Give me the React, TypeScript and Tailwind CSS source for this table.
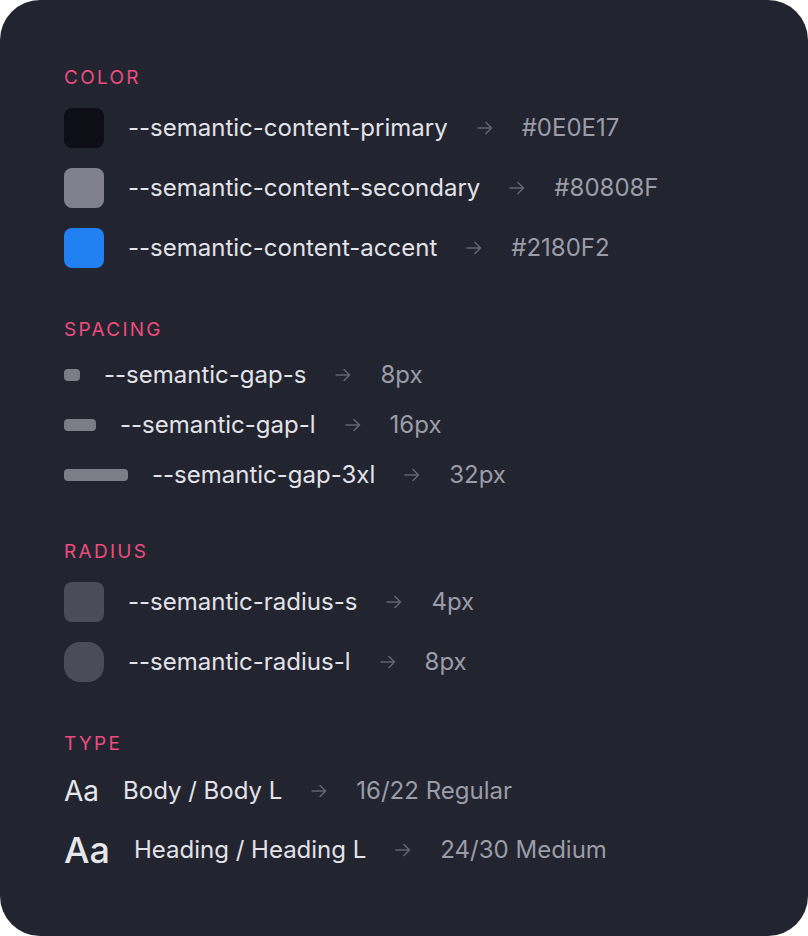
import React from 'react';

const Arrow = () => (
  <svg width="18" height="18" viewBox="0 0 18 18" fill="none" className="shrink-0 text-[#62646e]">
    <path d="M2 9 H15.5 M10 3.5 L15.5 9 L10 14.5" stroke="currentColor" strokeWidth="1.6" strokeLinecap="round" strokeLinejoin="round" />
  </svg>
);

const colors = [
  { name: '--semantic-content-primary', value: '#0E0E17', swatch: 'bg-[#0e0e17]' },
  { name: '--semantic-content-secondary', value: '#80808F', swatch: 'bg-[#80808f]' },
  { name: '--semantic-content-accent', value: '#2180F2', swatch: 'bg-[#2180f2]' },
];

const spacing = [
  { name: '--semantic-gap-s', value: '8px', bar: 'w-4' },
  { name: '--semantic-gap-l', value: '16px', bar: 'w-8' },
  { name: '--semantic-gap-3xl', value: '32px', bar: 'w-16' },
];

const radius = [
  { name: '--semantic-radius-s', value: '4px', box: 'rounded-lg' },
  { name: '--semantic-radius-l', value: '8px', box: 'rounded-2xl' },
];

const Heading = ({ children }: { children: React.ReactNode }) => (
  <h2 className="pt-[2px] -mb-[2px] text-[19px] leading-6 tracking-[0.12em] text-[#ec4c7e]">{children}</h2>
);

const Row = ({ lead, name, value }: { lead: React.ReactNode; name: string; value: string }) => (
  <div className="flex items-center">
    {lead}
    <span className="ml-6 text-[#e2e2e8]">{name}</span>
    <span className="mx-7"><Arrow /></span>
    <span className="text-[#9b9ca6]">{value}</span>
  </div>
);

export default function App() {
  return (
    <div className="min-h-screen bg-white">
      <div className="w-[808px] h-[936px] rounded-[40px] bg-[#222430] p-16 font-['Inter',sans-serif] text-[24px] leading-[30px]">
        <section>
          <Heading>COLOR</Heading>
          <div className="mt-5 flex flex-col gap-5">
            {colors.map((c) => (
              <Row
                key={c.name}
                lead={<div className={`w-10 h-10 rounded-lg ${c.swatch}`} />}
                name={c.name}
                value={c.value}
              />
            ))}
          </div>
        </section>

        <section className="mt-12">
          <Heading>SPACING</Heading>
          <div className="mt-5 flex flex-col gap-5">
            {spacing.map((s) => (
              <Row
                key={s.name}
                lead={<div className={`h-3 rounded-sm bg-[#7c7d87] ${s.bar}`} />}
                name={s.name}
                value={s.value}
              />
            ))}
          </div>
        </section>

        <section className="mt-12">
          <Heading>RADIUS</Heading>
          <div className="mt-5 flex flex-col gap-5">
            {radius.map((r) => (
              <Row
                key={r.name}
                lead={<div className={`w-10 h-10 bg-[#4a4d57] ${r.box}`} />}
                name={r.name}
                value={r.value}
              />
            ))}
          </div>
        </section>

        <section className="mt-12">
          <Heading>TYPE</Heading>
          <div className="mt-5 flex flex-col gap-5">
            <div className="flex items-center h-[34px]">
              <span className="text-[28px] leading-[34px] text-[#e6e6eb]">Aa</span>
              <span className="ml-6 text-[#e2e2e8]">Body / Body L</span>
              <span className="mx-7"><Arrow /></span>
              <span className="text-[#9b9ca6]">16/22 Regular</span>
            </div>
            <div className="flex items-center h-[44px]">
              <span className="text-[36px] leading-[44px] font-medium text-[#e6e6eb]">Aa</span>
              <span className="ml-6 text-[#e2e2e8]">Heading / Heading L</span>
              <span className="mx-7"><Arrow /></span>
              <span className="text-[#9b9ca6]">24/30 Medium</span>
            </div>
          </div>
        </section>
      </div>
    </div>
  );
}
